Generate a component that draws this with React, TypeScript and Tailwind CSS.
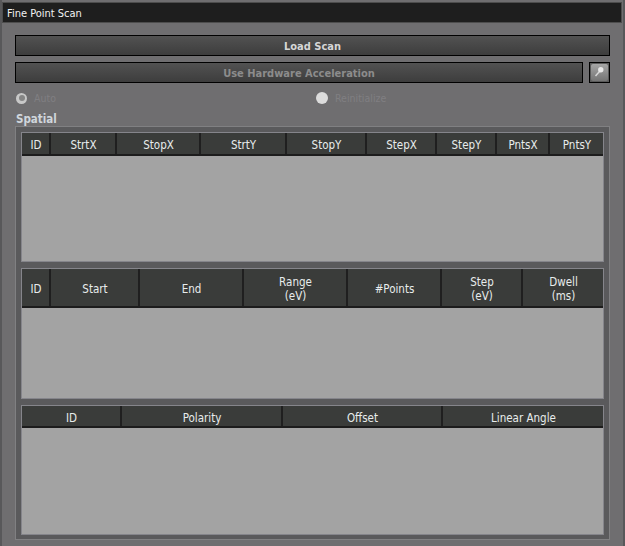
const spatial = [
  { label: "ID", w: "w-[29px]" },
  { label: "StrtX", w: "w-[66px]" },
  { label: "StopX", w: "w-[84px]" },
  { label: "StrtY", w: "w-[86px]" },
  { label: "StopY", w: "w-[80px]" },
  { label: "StepX", w: "w-[70px]" },
  { label: "StepY", w: "w-[60px]" },
  { label: "PntsX", w: "w-[53px]" },
  { label: "PntsY", w: "w-[53px]" },
];

const energy = [
  { label: "ID", w: "w-[29px]" },
  { label: "Start", w: "w-[89px]" },
  { label: "End", w: "w-[104px]" },
  { label: "Range", sub: "(eV)", w: "w-[104px]" },
  { label: "#Points", w: "w-[94px]" },
  { label: "Step", sub: "(eV)", w: "w-[81px]" },
  { label: "Dwell", sub: "(ms)", w: "w-[80px]" },
];

const polarity = [
  { label: "ID", w: "w-[100px]" },
  { label: "Polarity", w: "w-[161px]" },
  { label: "Offset", w: "w-[160px]" },
  { label: "Linear Angle", w: "w-[160px]" },
];

type Col = { label: string; sub?: string; w: string };

function Table({ cols, head, body, gap }: { cols: Col[]; head: string; body: string; gap?: string }) {
  return (
    <div className={`mx-[5px] w-[583px] border border-[#85858b] ${gap ?? ""}`}>
      <div className={`flex ${head} border-b-2 border-[#1c1c1c] bg-[#3a3c3a]`}>
        {cols.map((c) => (
          <div
            key={c.label}
            className={`${c.w} flex flex-col items-center justify-center border-r-2 border-[#1f1f1f] pl-px pt-[3px] text-[11.5px] leading-[14px] text-[#e8ecec] last:border-r-0`}
          >
            <span>{c.label}</span>
            {c.sub && <span>{c.sub}</span>}
          </div>
        ))}
      </div>
      <div className={`${body} bg-[#a3a3a3]`} />
    </div>
  );
}

export default function App() {
  return (
    <div
      className="h-[546px] w-[625px] overflow-hidden border-l-2 border-r-2 border-[#58585a] bg-[#6f6e70] pt-[2px] [font-stretch:condensed]"
      style={{ fontFamily: '"DejaVu Sans", "Noto Sans", sans-serif' }}
    >
      <div className="mr-px flex h-[21px] items-center border border-[#4d4d4d] bg-[#1e1e1e] pl-[4px] pt-[3px] text-[11px] text-[#f2f2f2]">
        Fine Point Scan
      </div>

      <div className="pl-[13px] pt-[12px]">
        <button className="flex h-[21px] w-[595px] items-center justify-center border border-black bg-gradient-to-b from-[#525252] to-[#3d3d3d] pt-[3px] text-[11px] font-bold text-[#d6d6d6]">
          Load Scan
        </button>

        <div className="mt-[6px] flex items-center gap-[6px]">
          <button className="flex h-[21px] w-[568px] items-center justify-center border border-black bg-gradient-to-b from-[#525252] to-[#3d3d3d] pt-[3px] text-[11px] font-bold text-[#8c8c8c]">
            Use Hardware Acceleration
          </button>
          <button className="flex h-[21px] w-[21px] items-center justify-center border border-black bg-[#5a5a5a]">
            <span className="flex h-[17px] w-[17px] items-center justify-center rounded-[2px] bg-gradient-to-b from-[#a6a6a6] to-[#747474]">
              <svg width="13" height="13" viewBox="0 0 13 13">
                <path d="M6.5 5.5 L2.5 10" stroke="#d8d8d8" strokeWidth="1.5" />
                <circle cx="7.8" cy="3.8" r="2.7" fill="#e8e8e8" />
              </svg>
            </span>
          </button>
        </div>

        <div className="mt-[7px] flex h-[16px] items-center text-[10.5px] text-[#807f82]">
          <div className="flex w-[301px] items-center gap-[7px] pl-[1px]">
            <span className="flex h-[11px] w-[11px] items-center justify-center rounded-full bg-[#c8c8c8]">
              <span className="h-[6px] w-[6px] rounded-full bg-[#858585]" />
            </span>
            <span className="pt-px">Auto</span>
          </div>
          <div className="flex items-center gap-[7px]">
            <span className="h-[12px] w-[12px] rounded-full bg-[#dcdcdc]" />
            <span className="pt-px">Reinitialize</span>
          </div>
        </div>

        <div className="mt-[3px] h-[17px] pl-px text-[11.5px] font-bold leading-[21px] text-[#cfd6dc]">Spatial</div>

        <div className="h-[414px] w-[595px] border border-[#808082] bg-[#5a5a5c] pt-[5px]">
          <Table cols={spatial} head="h-[23px]" body="h-[105px]" />
          <Table cols={energy} head="h-[39px]" body="h-[90px]" gap="mt-[6px]" />
          <Table cols={polarity} head="h-[22px]" body="h-[106px]" gap="mt-[6px]" />
        </div>
      </div>
    </div>
  );
}
